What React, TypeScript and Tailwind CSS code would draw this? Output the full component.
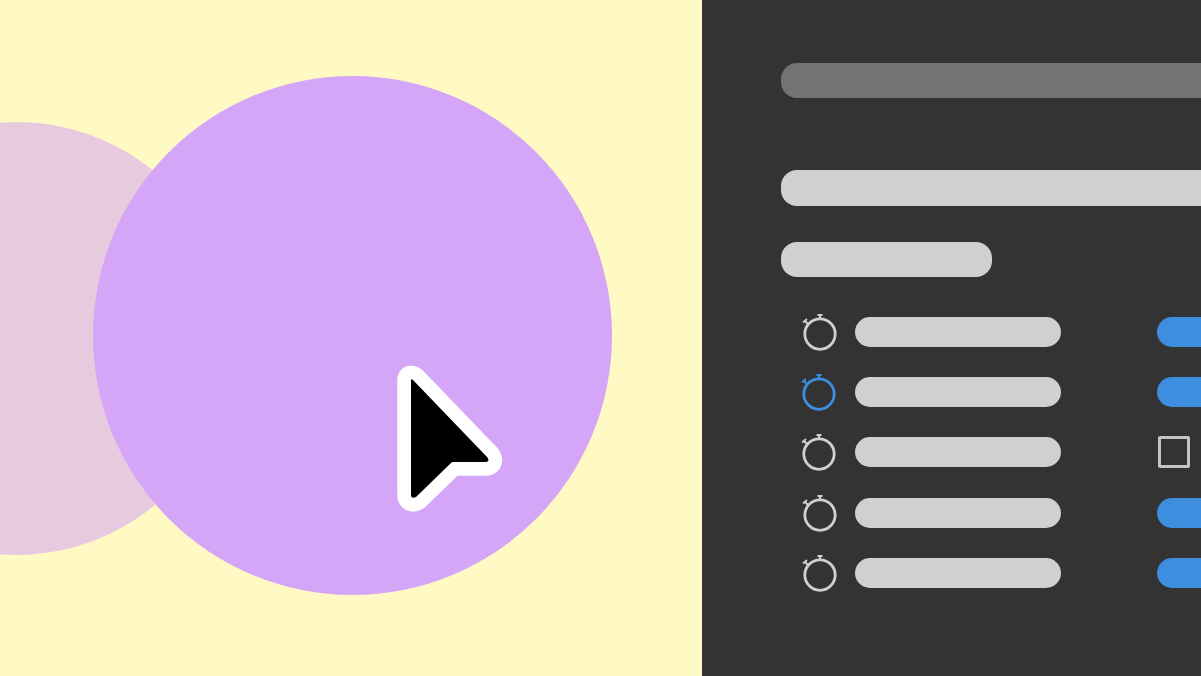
const ROWS = [
  { blue: false, shift: false, box: false },
  { blue: true, shift: true, box: false },
  { blue: false, shift: true, box: true },
  { blue: false, shift: false, box: false },
  { blue: false, shift: false, box: false },
]

function Timer({ blue, shift }: { blue: boolean; shift: boolean }) {
  return (
    <svg
      width="36"
      height="40"
      viewBox="0 0 36 40"
      fill="none"
      stroke={blue ? '#3d8ede' : '#d0d0d0'}
      className={shift ? '-my-[5px] shrink-0 -ml-[1.5px] mr-[1.5px]' : '-my-[5px] shrink-0'}
    >
      <circle cx="18" cy="22.1" r="15.2" strokeWidth="2.8" />
      <path d="M18 7V3.5M15.5 3H20.5" strokeWidth="2" />
      <path d="M6 12L2.5 8.5" strokeWidth="2" />
      <path d="M1 10.5L5 7" strokeWidth="1.8" />
    </svg>
  )
}

function Cursor() {
  const arrow = 'M411 380 Q411 378.5 413 380 L487.5 457.5 Q490 461.5 486 462 L453 462 Q451.5 462.2 450.5 463.5 L416 497 Q411 499.5 411 494.5 Z'
  return (
    <svg width="1201" height="676" viewBox="0 0 1201 676" className="absolute left-0 top-0">
      <path d={arrow} fill="#fff" stroke="#fff" strokeWidth="27.5" strokeLinejoin="round" />
      <path d={arrow} fill="#000" />
    </svg>
  )
}

export default function App() {
  return (
    <div className="flex h-[676px] w-[1201px] overflow-hidden bg-[#333333]">
      <div className="relative h-full w-[702px] shrink-0 overflow-hidden bg-[#fff9c4]">
        <div className="absolute left-[-200.5px] top-[122px] h-[433px] w-[433px] rounded-full bg-[#e8cadf]" />
        <div className="absolute left-[93px] top-[76px] h-[519px] w-[519px] rounded-full bg-[#d5a5f8]" />
        <Cursor />
      </div>

      <div className="min-w-0 flex-1 overflow-hidden pl-[79px] pt-[63px]">
        <div className="h-[35px] w-[440px] rounded-[16px] bg-[#737373]" />
        <div className="mt-[72px] h-[36px] w-[440px] rounded-[16px] bg-[#d0d0d0]" />
        <div className="mt-[36px] h-[34.5px] w-[211px] rounded-[16px] bg-[#d0d0d0]" />

        <div className="mt-[40.4px] flex flex-col gap-[30.25px] pl-[21px]">
          {ROWS.map((row, i) => (
            <div key={i} className="flex h-[30px] items-center">
              <Timer blue={row.blue} shift={row.shift} />
              <div className="ml-[17px] h-[30px] w-[206px] shrink-0 rounded-[15px] bg-[#d0d0d0]" />
              {row.box ? (
                <div className="ml-[97px] h-[32px] w-[32px] shrink-0 rounded-[2px] border-[3px] border-[#c4c4c4]" />
              ) : (
                <div className="ml-[96px] h-[30px] w-[80px] shrink-0 rounded-[15px] bg-[#3d8ede]" />
              )}
            </div>
          ))}
        </div>
      </div>
    </div>
  )
}
